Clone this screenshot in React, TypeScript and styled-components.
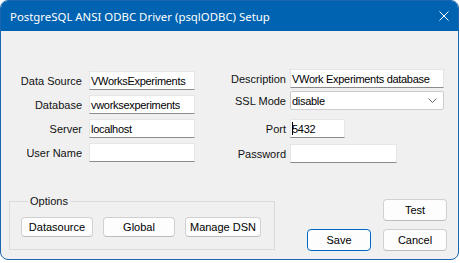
import React from "react";
import styled, { createGlobalStyle } from "styled-components";

const Global = createGlobalStyle`
  html, body { margin: 0; padding: 0; background: #ffffff; }
  body { width: 460px; height: 263px; overflow: hidden; }
`;

const Window = styled.div`
  width: 459px;
  height: 260px;
  box-sizing: border-box;
  border: 1px solid #1b66b0;
  border-radius: 8px;
  overflow: hidden;
  background: #f0f0f0;
  display: flex;
  flex-direction: column;
  font-family: "Liberation Sans", Arial, sans-serif;
  font-size: 11px;
  color: #000;
`;

const TitleBar = styled.div`
  height: 30px;
  flex: none;
  background: #0063b1;
  display: flex;
  align-items: center;
  justify-content: space-between;
  padding: 0 9px 0 9px;
`;

const Title = styled.div`
  font-family: "Segoe UI", "Noto Sans", sans-serif;
  font-size: 11.4px;
  color: #ffffff;
`;

const Close = styled.div`
  width: 10px;
  height: 10px;
  display: flex;
`;

const Body = styled.div`
  flex: 1;
  display: flex;
  flex-direction: column;
  padding: 38px 11px 0 7px;
`;

const Fields = styled.div`
  display: flex;
  gap: 34px;
`;

const Column = styled.div<{ $offset: number }>`
  display: flex;
  flex-direction: column;
  padding-top: ${(p) => p.$offset}px;
`;

const Row = styled.div<{ $gap: number; $labelWidth: number; $spacing: number }>`
  display: flex;
  align-items: center;
  height: 19px;
  margin-top: ${(p) => p.$gap}px;
  & > label {
    width: ${(p) => p.$labelWidth}px;
    margin-right: ${(p) => p.$spacing}px;
  }
`;

const Label = styled.label`
  text-align: right;
  white-space: nowrap;
  flex: none;
  color: #111;
`;

const TextBox = styled.div<{ $width: number }>`
  width: ${(p) => p.$width}px;
  height: 19px;
  box-sizing: border-box;
  background: #ffffff;
  border: 1px solid #e6e6e6;
  border-bottom: 1px solid #8c8c8c;
  padding: 0 1px;
  display: flex;
  align-items: center;
  white-space: nowrap;
  overflow: hidden;
  letter-spacing: -0.3px;
`;

const Caret = styled.span`
  display: inline-block;
  width: 1px;
  height: 13px;
  background: #000;
  margin-right: -1px;
  position: relative;
`;

const Select = styled.div<{ $width: number }>`
  width: ${(p) => p.$width}px;
  height: 19px;
  box-sizing: border-box;
  background: #ffffff;
  border: 1px solid #cccccc;
  border-radius: 2px;
  padding: 0 6px 0 1px;
  display: flex;
  align-items: center;
  justify-content: space-between;
  letter-spacing: -0.3px;
`;

const Bottom = styled.div`
  display: flex;
  align-items: flex-start;
  margin-top: 32px;
`;

const Group = styled.fieldset`
  margin: 0 0 0 1px;
  width: 266px;
  box-sizing: border-box;
  border: 1px solid #dadada;
  padding: 9px 0 12px 11px;
  display: flex;
  gap: 10px;
  & > legend {
    margin-left: 7px;
    padding: 0 2px;
    line-height: 13px;
    color: #111;
  }
`;

const Button = styled.button<{ $width: number; $h?: number; $primary?: boolean }>`
  width: ${(p) => p.$width}px;
  height: ${(p) => p.$h ?? 20}px;
  box-sizing: border-box;
  background: #fdfdfd;
  border: 1px solid ${(p) => (p.$primary ? "#0067c0" : "#d0d0d0")};
  border-bottom-color: ${(p) => (p.$primary ? "#0067c0" : "#bdbdbd")};
  border-radius: 4px;
  font-family: "Liberation Sans", Arial, sans-serif;
  font-size: 11px;
  color: #000;
  padding: 0;
  margin: 0;
`;

const Actions = styled.div`
  margin-left: auto;
  margin-top: 4px;
  display: grid;
  grid-template-columns: 64px 64px;
  column-gap: 12px;
  row-gap: 8px;
`;

const Slot = styled.div<{ $col: number; $row: number }>`
  grid-column: ${(p) => p.$col};
  grid-row: ${(p) => p.$row};
`;

export default function App() {
  return (
    <>
      <Global />
      <Window>
        <TitleBar>
          <Title>PostgreSQL ANSI ODBC Driver (psqlODBC) Setup</Title>
          <Close>
            <svg width="10" height="10" viewBox="0 0 10 10">
              <path d="M0.5 0.5 L9.5 9.5 M9.5 0.5 L0.5 9.5" stroke="#ffffff" strokeWidth="1" />
            </svg>
          </Close>
        </TitleBar>
        <Body>
          <Fields>
            <Column $offset={2}>
              <Row $gap={0} $labelWidth={74} $spacing={7}>
                <Label>Data Source</Label>
                <TextBox $width={106}>VWorksExperiments</TextBox>
              </Row>
              <Row $gap={5} $labelWidth={74} $spacing={7}>
                <Label>Database</Label>
                <TextBox $width={106}>vworksexperiments</TextBox>
              </Row>
              <Row $gap={5} $labelWidth={74} $spacing={7}>
                <Label>Server</Label>
                <TextBox $width={106}>localhost</TextBox>
              </Row>
              <Row $gap={5} $labelWidth={74} $spacing={7}>
                <Label>User Name</Label>
                <TextBox $width={106}></TextBox>
              </Row>
            </Column>
            <Column $offset={0}>
              <Row $gap={0} $labelWidth={57} $spacing={4}>
                <Label>Description</Label>
                <TextBox $width={154}>VWork Experiments database</TextBox>
              </Row>
              <Row $gap={3} $labelWidth={57} $spacing={4}>
                <Label>SSL Mode</Label>
                <Select $width={154}>
                  <span>disable</span>
                  <svg width="9" height="5" viewBox="0 0 9 5">
                    <path d="M0.5 0.5 L4.5 4.5 L8.5 0.5" stroke="#666" fill="none" strokeWidth="1" />
                  </svg>
                </Select>
              </Row>
              <Row $gap={9} $labelWidth={57} $spacing={4}>
                <Label>Port</Label>
                <TextBox $width={55}>
                  <Caret />
                  5432
                </TextBox>
              </Row>
              <Row $gap={6} $labelWidth={57} $spacing={4}>
                <Label>Password</Label>
                <TextBox $width={107}></TextBox>
              </Row>
            </Column>
          </Fields>
          <Bottom>
            <Group>
              <legend>Options</legend>
              <Button $width={72}>Datasource</Button>
              <Button $width={72}>Global</Button>
              <Button $width={76}>Manage DSN</Button>
            </Group>
            <Actions>
              <Slot $col={2} $row={1}>
                <Button $width={64} $h={22}>Test</Button>
              </Slot>
              <Slot $col={1} $row={2}>
                <Button $width={64} $h={22} $primary>Save</Button>
              </Slot>
              <Slot $col={2} $row={2}>
                <Button $width={64} $h={22}>Cancel</Button>
              </Slot>
            </Actions>
          </Bottom>
        </Body>
      </Window>
    </>
  );
}
